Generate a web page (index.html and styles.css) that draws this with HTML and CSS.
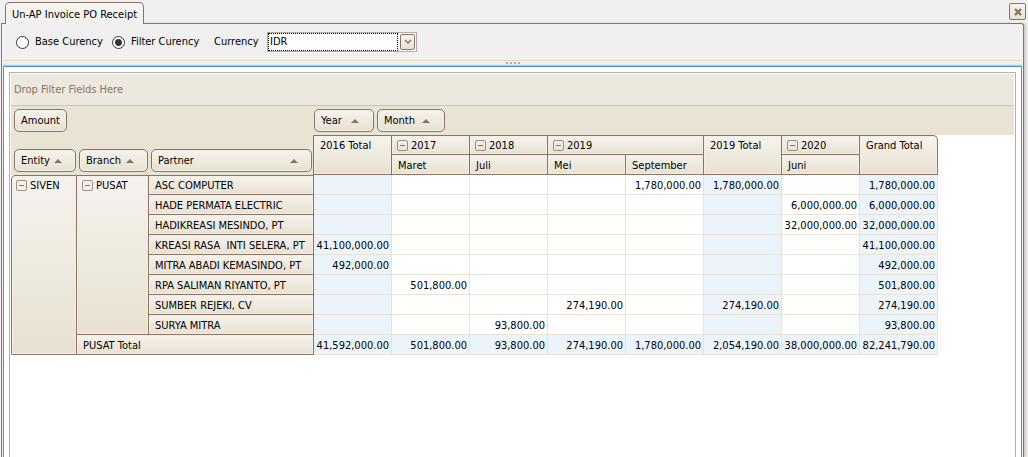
FILE: index.html
```html
<!DOCTYPE html>
<html lang="en">
<head>
    <meta charset="UTF-8">
    <meta name="viewport" content="width=device-width, initial-scale=1.0">
    <title>Un-AP Invoice PO Receipt</title>
    <link rel="stylesheet" href="styles.css">
</head>
<body>
    <header class="tab-bar">
        <a href="#page" class="tab">Un-AP Invoice PO Receipt</a>
        <button class="close" aria-label="Close">
            <svg width="8" height="8" viewBox="0 0 8 8"><path d="M1 1L7 7M7 1L1 7" stroke="#8b7366" stroke-width="2.4"/></svg>
        </button>
    </header>

    <main class="page" id="page">
        <form class="toolbar">
            <label class="radio"><input type="radio" name="mode">Base Curency</label>
            <label class="radio"><input type="radio" name="mode" checked>Filter Curency</label>
            <label class="currency-label" for="currency">Currency</label>
            <div class="combo">
                <select id="currency">
                    <option>IDR</option>
                </select>
                <span class="combo-arrow">
                    <svg width="8" height="6" viewBox="0 0 8 6"><path d="M1 1L4 4L7 1" fill="none" stroke="#8b7366" stroke-width="1.5"/></svg>
                </span>
            </div>
        </form>

        <div class="splitter"><i></i><i></i><i></i><i></i></div>

        <div class="content">
            <div class="pivot">
                <div class="filter-area">Drop Filter Fields Here</div>
                <div class="field-area">
                    <div class="data-fields">
                        <button class="field">Amount</button>
                    </div>
                    <div class="column-fields">
                        <button class="field field-year">Year <span class="sort"></span></button>
                        <button class="field field-month">Month <span class="sort"></span></button>
                    </div>
                </div>

                <table>
                    <colgroup>
                        <col class="col-entity">
                        <col class="col-branch">
                        <col class="col-partner">
                        <col span="8" class="col-value">
                    </colgroup>
                    <thead>
                        <tr>
                            <td class="corner" colspan="3" rowspan="2">
                                <div class="row-fields">
                                    <button class="field field-entity">Entity <span class="sort"></span></button>
                                    <button class="field field-branch">Branch <span class="sort"></span></button>
                                    <button class="field field-partner">Partner <span class="sort"></span></button>
                                </div>
                            </td>
                            <th rowspan="2">2016 Total</th>
                            <th class="group"><button class="toggle" aria-label="Collapse 2017"></button>2017</th>
                            <th class="group"><button class="toggle" aria-label="Collapse 2018"></button>2018</th>
                            <th class="group" colspan="2"><button class="toggle" aria-label="Collapse 2019"></button>2019</th>
                            <th rowspan="2">2019 Total</th>
                            <th class="group"><button class="toggle" aria-label="Collapse 2020"></button>2020</th>
                            <th class="last" rowspan="2">Grand Total</th>
                        </tr>
                        <tr>
                            <th>Maret</th>
                            <th>Juli</th>
                            <th>Mei</th>
                            <th>September</th>
                            <th>Juni</th>
                        </tr>
                    </thead>
                    <tbody>
                        <tr>
                            <th class="group first" rowspan="9"><button class="toggle" aria-label="Collapse SIVEN"></button>SIVEN</th>
                            <th class="group" rowspan="8"><button class="toggle" aria-label="Collapse PUSAT"></button>PUSAT</th>
                            <th>ASC COMPUTER</th>
                            <td class="total"></td>
                            <td></td>
                            <td></td>
                            <td></td>
                            <td>1,780,000.00</td>
                            <td class="total">1,780,000.00</td>
                            <td></td>
                            <td class="total">1,780,000.00</td>
                        </tr>
                        <tr>
                            <th>HADE PERMATA ELECTRIC</th>
                            <td class="total"></td>
                            <td></td>
                            <td></td>
                            <td></td>
                            <td></td>
                            <td class="total"></td>
                            <td>6,000,000.00</td>
                            <td class="total">6,000,000.00</td>
                        </tr>
                        <tr>
                            <th>HADIKREASI MESINDO, PT</th>
                            <td class="total"></td>
                            <td></td>
                            <td></td>
                            <td></td>
                            <td></td>
                            <td class="total"></td>
                            <td>32,000,000.00</td>
                            <td class="total">32,000,000.00</td>
                        </tr>
                        <tr>
                            <th>KREASI RASA&nbsp; INTI SELERA, PT</th>
                            <td class="total">41,100,000.00</td>
                            <td></td>
                            <td></td>
                            <td></td>
                            <td></td>
                            <td class="total"></td>
                            <td></td>
                            <td class="total">41,100,000.00</td>
                        </tr>
                        <tr>
                            <th>MITRA ABADI KEMASINDO, PT</th>
                            <td class="total">492,000.00</td>
                            <td></td>
                            <td></td>
                            <td></td>
                            <td></td>
                            <td class="total"></td>
                            <td></td>
                            <td class="total">492,000.00</td>
                        </tr>
                        <tr>
                            <th>RPA SALIMAN RIYANTO, PT</th>
                            <td class="total"></td>
                            <td>501,800.00</td>
                            <td></td>
                            <td></td>
                            <td></td>
                            <td class="total"></td>
                            <td></td>
                            <td class="total">501,800.00</td>
                        </tr>
                        <tr>
                            <th>SUMBER REJEKI, CV</th>
                            <td class="total"></td>
                            <td></td>
                            <td></td>
                            <td>274,190.00</td>
                            <td></td>
                            <td class="total">274,190.00</td>
                            <td></td>
                            <td class="total">274,190.00</td>
                        </tr>
                        <tr>
                            <th>SURYA MITRA</th>
                            <td class="total"></td>
                            <td></td>
                            <td>93,800.00</td>
                            <td></td>
                            <td></td>
                            <td class="total"></td>
                            <td></td>
                            <td class="total">93,800.00</td>
                        </tr>
                        <tr>
                            <th colspan="2">PUSAT Total</th>
                            <td class="total">41,592,000.00</td>
                            <td class="total">501,800.00</td>
                            <td class="total">93,800.00</td>
                            <td class="total">274,190.00</td>
                            <td class="total">1,780,000.00</td>
                            <td class="total">2,054,190.00</td>
                            <td class="total">38,000,000.00</td>
                            <td class="total">82,241,790.00</td>
                        </tr>
                    </tbody>
                </table>
            </div>
        </div>
    </main>
</body>
</html>
```
FILE: styles.css
```css
* {
    box-sizing: border-box;
}
body {
    display: flex;
    flex-direction: column;
    height: 100vh;
    margin: 0;
    padding: 0 4px 0 1px;
    overflow: hidden;
    background: #f0f0f0;
    color: #000;
    font-family: "DejaVu Sans Condensed", "Noto Sans", sans-serif;
    font-size: 11px;
    line-height: 14px;
}
button, select {
    font: inherit;
    color: inherit;
}
button {
    padding: 0;
    cursor: pointer;
}

/* Tabs */
.tab-bar {
    display: flex;
    justify-content: space-between;
    align-items: flex-start;
    padding: 2px 0 0 4px;
}
.tab {
    position: relative;
    z-index: 1;
    height: 22px;
    margin-bottom: -1px;
    padding: 5px 6px 3px;
    border: 1px solid #8b7366;
    border-bottom: none;
    border-radius: 5px 5px 0 0;
    background: linear-gradient(#f7f5f0, #f0f0f0);
    color: #000;
    text-decoration: none;
    white-space: nowrap;
}
.close {
    display: flex;
    align-items: center;
    justify-content: center;
    width: 17px;
    height: 17px;
    margin: 1px -2px 0 0;
    border: 1px solid #8b7366;
    border-radius: 2px;
    background: linear-gradient(#f7f5f0, #e9e2d2);
}

/* Page */
.page {
    display: flex;
    flex: 1;
    flex-direction: column;
    min-height: 0;
    padding: 0 1px;
    border: 1px solid #8b7366;
    border-bottom: none;
    border-radius: 0 3px 0 0;
    box-shadow: 2px 0 2px #d0cbc5;
}
.toolbar {
    display: flex;
    align-items: center;
    height: 36px;
    padding-left: 13px;
}
.radio {
    display: flex;
    align-items: center;
    gap: 6px;
    width: 96px;
    white-space: nowrap;
}
.radio input {
    appearance: none;
    flex: none;
    width: 13px;
    height: 13px;
    margin: 0;
    border: 1px solid #333;
    border-radius: 50%;
    background: #fff;
}
.radio input:checked {
    background: radial-gradient(circle, #333 3px, #fff 4px);
}
.currency-label {
    width: 53px;
    margin-left: 6px;
}
.combo {
    position: relative;
    width: 150px;
    height: 20px;
    border: 1px solid #b9aaa0;
    background: #fff;
}
.combo select {
    appearance: none;
    display: block;
    width: 130px;
    height: 18px;
    padding: 0 1px;
    border: 1px dotted #000;
    border-radius: 0;
    outline: none;
    background: #fff;
}
.combo-arrow {
    position: absolute;
    top: 1px;
    right: 1px;
    display: flex;
    align-items: center;
    justify-content: center;
    width: 15px;
    height: 16px;
    border: 1px solid #8b7366;
    border-radius: 2px;
    background: linear-gradient(#f7f5f0, #e9e2d2);
    pointer-events: none;
}
.splitter {
    display: flex;
    align-items: center;
    justify-content: center;
    gap: 2px;
    height: 6px;
    border-top: 1px solid #e0d8c6;
    border-bottom: 1px solid #cfc4b4;
    background: linear-gradient(#f7f5f0, #ebe5d8);
}
.splitter i {
    width: 2px;
    height: 2px;
    background: #b9a797;
}
.content {
    flex: 1;
    min-height: 0;
    padding: 5px 5px 0;
    border: 1px solid #3a95ee;
    border-bottom: none;
    background: #fff;
}

/* Pivot grid */
.pivot {
    height: 100%;
    padding: 1px 1px 0;
    border: 1px solid #b9aea6;
    border-bottom: none;
}
.filter-area {
    height: 32px;
    padding: 9px 3px;
    border-bottom: 1px solid #cbc1b7;
    background: #ece8dd;
    color: #8b7366;
}
.field-area {
    display: flex;
    height: 29px;
    padding: 3px;
    background: #e9e3d4;
}
.data-fields {
    width: 300px;
}
.column-fields {
    display: flex;
    gap: 3px;
}
.field {
    display: flex;
    align-items: center;
    justify-content: space-between;
    height: 23px;
    padding: 0 6px;
    border: 1px solid #8b7366;
    border-radius: 5px;
    background: linear-gradient(#f5f3ee, #e8e1d1);
    box-shadow: inset 0 0 0 1px #f3efe6;
}
.field-year {
    width: 60px;
    padding-right: 14px;
}
.field-month {
    width: 68px;
    padding-right: 14px;
}
.field-entity {
    width: 62px;
    padding-right: 13px;
}
.field-branch {
    width: 69px;
    padding-right: 13px;
}
.field-partner {
    width: 161px;
    padding-right: 13px;
}
.sort {
    border: 4px solid transparent;
    border-top: none;
    border-bottom-color: #8b7366;
}
table {
    width: 927px;
    border-spacing: 0;
    table-layout: fixed;
}
.col-entity {
    width: 66px;
}
.col-branch {
    width: 72px;
}
.col-partner {
    width: 165px;
}
.col-value {
    width: 78px;
}
th, td {
    height: 20px;
    padding: 2px 2px 0;
    border: 0 solid #e9e3d6;
    border-width: 0 1px 1px 0;
    text-align: right;
    white-space: nowrap;
}
th {
    padding: 4px 6px 0;
    border-color: #8b7366;
    background: linear-gradient(#f5f3ee, #e8e1d1);
    box-shadow: inset 0 0 0 1px #f3efe6;
    font-weight: normal;
    text-align: left;
    vertical-align: top;
}
.group {
    padding-left: 5px;
}
thead tr:first-child th, tbody tr:first-child th {
    padding-top: 3px;
    border-top-width: 1px;
}
.first {
    padding-left: 4px;
    border-left-width: 1px;
    border-top-left-radius: 4px;
}
.last {
    border-top-right-radius: 5px;
}
.corner {
    padding: 0 1px 3px 3px;
    border-color: #8b7366;
    border-bottom: none;
    background: #e9e3d4;
    vertical-align: bottom;
}
.row-fields {
    display: flex;
    gap: 3px;
}
.total {
    background: #ebf4fb;
}
.toggle {
    display: inline-block;
    width: 11px;
    height: 11px;
    margin-right: 3px;
    border: 1px solid #a08c80;
    border-radius: 2px;
    background: linear-gradient(#8b7366, #8b7366) center / 5px 1px no-repeat;
    vertical-align: -1px;
}
```
